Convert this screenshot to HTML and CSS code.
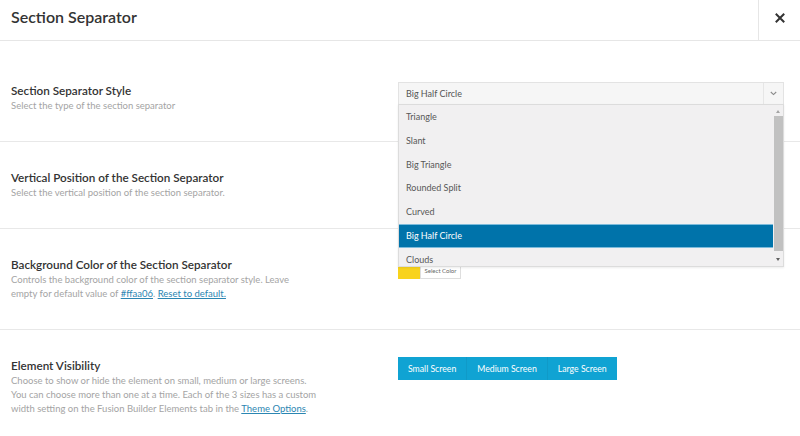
FILE: index.html
```html
<!DOCTYPE html>
<html lang="en">
<head>
<meta charset="utf-8">
<title>Section Separator</title>
<link rel="stylesheet" href="styles.css">
</head>
<body>
<div class="modal">
  <header class="modal-head">
    <h1 class="modal-title">Section Separator</h1>
    <button class="close" aria-label="Close">
      <svg width="10" height="10" viewBox="0 0 10 10"><path d="M1.5 1.5 L8.5 8.5 M8.5 1.5 L1.5 8.5" stroke="#333" stroke-width="2" stroke-linecap="square"/></svg>
    </button>
  </header>
  <main class="modal-body">
    <section class="row">
      <div class="info">
        <h2 class="opt-title">Section Separator Style</h2>
        <p class="opt-desc">Select the type of the section separator</p>
      </div>
      <div class="control">
        <div class="select-wrap">
          <div class="select">
            <span class="select-value">Big Half Circle</span>
            <span class="select-arrow">
              <svg width="7" height="5" viewBox="0 0 7 5"><path d="M0.8 1 L3.5 3.6 L6.2 1" fill="none" stroke="#8a8a8a" stroke-width="1.1"/></svg>
            </span>
          </div>
          <div class="listbox">
            <ul class="options">
              <li>Triangle</li>
              <li>Slant</li>
              <li>Big Triangle</li>
              <li>Rounded Split</li>
              <li>Curved</li>
              <li class="active">Big Half Circle</li>
              <li>Clouds</li>
            </ul>
            <div class="scrollbar">
              <span class="sb-arrow up"></span>
              <span class="sb-thumb"></span>
              <span class="sb-arrow down"></span>
            </div>
          </div>
        </div>
      </div>
    </section>
    <section class="row">
      <div class="info">
        <h2 class="opt-title">Vertical Position of the Section Separator</h2>
        <p class="opt-desc">Select the vertical position of the section separator.</p>
      </div>
      <div class="control"></div>
    </section>
    <section class="row">
      <div class="info">
        <h2 class="opt-title">Background Color of the Section Separator</h2>
        <p class="opt-desc">Controls the background color of the section separator style. Leave<br>empty for default value of <a href="#">#ffaa06</a>. <a href="#">Reset to default.</a></p>
      </div>
      <div class="control">
        <div class="colorpicker">
          <span class="swatch"></span>
          <span class="pick-btn">Select Color</span>
        </div>
      </div>
    </section>
    <section class="row last">
      <div class="info">
        <h2 class="opt-title">Element Visibility</h2>
        <p class="opt-desc">Choose to show or hide the element on small, medium or large screens.<br>You can choose more than one at a time. Each of the 3 sizes has a custom<br>width setting on the Fusion Builder Elements tab in the <a href="#">Theme Options</a>.</p>
      </div>
      <div class="control">
        <div class="btnset">
          <button class="btn">Small Screen</button><button class="btn">Medium Screen</button><button class="btn">Large Screen</button>
        </div>
      </div>
    </section>
  </main>
</div>
</body>
</html>
```
FILE: styles.css
```css
* { box-sizing: border-box; }
html, body { margin: 0; padding: 0; background: #fff; }
body {
  font-family: "Lato", "Open Sans", sans-serif;
  color: #333;
  width: 800px;
  height: 436px;
  overflow: hidden;
}
.modal { width: 800px; }

.modal-head {
  display: flex;
  align-items: stretch;
  height: 41px;
  border-bottom: 1px solid #e6e6e6;
}
.modal-title {
  flex: 1;
  margin: 0;
  padding: 7px 0 0 11px;
  font-size: 16px;
  font-weight: 600;
  line-height: 20px;
  color: #333;
}
.close {
  width: 42px;
  border: 0;
  border-left: 1px solid #e6e6e6;
  background: #fff;
  padding: 0 0 4px 1px;
  display: flex;
  align-items: center;
  justify-content: center;
}

.modal-body { padding-top: 14px; }

.row {
  display: grid;
  grid-template-columns: 398px 386px;
  align-items: start;
  padding: 26px 0 28px;
  border-bottom: 1px solid #e8e8e8;
}
.row.last { border-bottom: 0; }

.info { padding-left: 11px; }
.opt-title {
  margin: 0;
  font-size: 11.7px;
  font-weight: 600;
  line-height: 18px;
  color: #333;
}
.opt-desc {
  margin: 0;
  font-size: 9.5px;
  line-height: 14px;
  color: #a4a4a4;
  white-space: nowrap;
}
.opt-desc a { color: #2b86b2; text-decoration: underline; }

.control { position: relative; margin-top: 1px; }

/* select + open dropdown */
.select-wrap { position: relative; }
.select {
  display: flex;
  align-items: center;
  height: 23px;
  border: 1px solid #e3e3e3;
  background: #f6f6f6;
  font-size: 9px;
  color: #555;
}
.select-value { flex: 1; padding-left: 7px; }
.select-arrow {
  width: 20px;
  height: 100%;
  border-left: 1px solid #e6e6e6;
  display: flex;
  align-items: center;
  justify-content: center;
}
.listbox {
  position: absolute;
  z-index: 5;
  top: 22px;
  left: 0;
  width: 386px;
  height: 163px;
  display: flex;
  background: #f1f0f1;
  border: 1px solid #dcdcdc;
  box-shadow: 0 1px 2px rgba(0,0,0,0.08);
  overflow: hidden;
}
.options {
  flex: 1;
  list-style: none;
  margin: 0;
  padding: 0;
}
.options li {
  height: 23.8px;
  line-height: 24px;
  padding-left: 7px;
  font-size: 9px;
  color: #585858;
}
.options li.active {
  background: #0073aa;
  color: #fff;
  box-shadow: inset 0 1px 0 #7cbbdb, inset 0 -1px 0 #7cbbdb;
}
.scrollbar {
  width: 10px;
  display: flex;
  flex-direction: column;
  align-items: center;
  background: #f1f0f1;
  padding: 5px 0 3px;
}
.sb-arrow {
  width: 0;
  height: 0;
  border-left: 2.5px solid transparent;
  border-right: 2.5px solid transparent;
}
.sb-arrow.up { border-bottom: 3px solid #a5a5a5; }
.sb-arrow.down { border-top: 3px solid #606060; }
.sb-thumb {
  width: 9px;
  height: 135px;
  margin: 3px 0 7px;
  background: #c1c1c1;
}

/* colour picker */
.colorpicker {
  display: flex;
  height: 23px;
}
.swatch {
  width: 22px;
  background: #f8d31c;
}
.pick-btn {
  width: 41px;
  border: 1px solid #dedede;
  background: #fff;
  font-size: 6px;
  color: #666;
  display: flex;
  align-items: flex-end;
  justify-content: center;
  padding-bottom: 4px;
}

/* button set */
.btnset { display: flex; }
.btn {
  height: 23px;
  padding: 0 10px;
  border: 0;
  border-right: 1px solid #109ac8;
  background: #10a3d3;
  color: #fff;
  font-family: "Lato", "Open Sans", sans-serif;
  font-size: 8.7px;
  line-height: 23px;
}
.btn:last-child { border-right: 0; }
```
